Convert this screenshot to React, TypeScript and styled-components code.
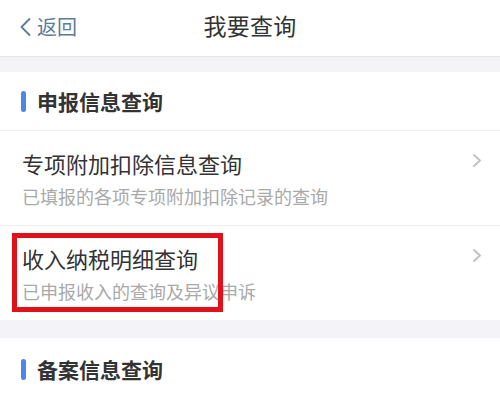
import styled, { createGlobalStyle } from "styled-components";

const GlobalStyle = createGlobalStyle`
  html, body {
    margin: 0;
    padding: 0;
    background: #ffffff;
  }
  body {
    font-family: "Noto Sans CJK SC", "Noto Sans", sans-serif;
    color: #333333;
    overflow: hidden;
  }
`;

interface QueryItem {
  title: string;
  desc: string;
  highlighted?: boolean;
}

const declareItems: QueryItem[] = [
  {
    title: "专项附加扣除信息查询",
    desc: "已填报的各项专项附加扣除记录的查询",
  },
  {
    title: "收入纳税明细查询",
    desc: "已申报收入的查询及异议申诉",
    highlighted: true,
  },
];

const BackIcon = () => (
  <svg width="15" height="20" viewBox="0 0 15 20" fill="none">
    <path
      d="M11.5 2 L3.5 10 L11.5 18"
      stroke="#5d7c98"
      strokeWidth="1.8"
      strokeLinecap="round"
      strokeLinejoin="round"
    />
  </svg>
);

const ChevronIcon = () => (
  <svg width="10" height="15" viewBox="0 0 10 15" fill="none">
    <path
      d="M2 2 L8 7.5 L2 13"
      stroke="#c2c2c2"
      strokeWidth="2"
      strokeLinecap="round"
      strokeLinejoin="round"
    />
  </svg>
);

const App = () => {
  return (
    <Page>
      <GlobalStyle />
      <NavBar>
        <BackButton>
          <BackIcon />
          <span>返回</span>
        </BackButton>
        <NavTitle>我要查询</NavTitle>
      </NavBar>
      <Gap $height={15} />
      <Section>
        <SectionHeading>
          <Marker />
          申报信息查询
        </SectionHeading>
        {declareItems.map((item) => (
          <Row key={item.title}>
            <RowText>
              <RowTitle>{item.title}</RowTitle>
              <RowDesc>{item.desc}</RowDesc>
            </RowText>
            <ChevronIcon />
            {item.highlighted && <Highlight />}
          </Row>
        ))}
      </Section>
      <Gap $height={18} />
      <Section>
        <SectionHeading $tall>
          <Marker />
          备案信息查询
        </SectionHeading>
      </Section>
    </Page>
  );
};

export default App;

const Page = styled.div`
  width: 500px;
  height: 400px;
  display: flex;
  flex-direction: column;
  background: #ffffff;
`;

const NavBar = styled.header`
  height: 56px;
  flex-shrink: 0;
  display: grid;
  grid-template-columns: 1fr auto 1fr;
  align-items: center;
  padding: 0 18px;
  border-bottom: 1px solid #e3e3ea;
  background: #ffffff;
`;

const BackButton = styled.div`
  display: flex;
  align-items: center;
  gap: 4px;
  color: #5d7c98;
  font-size: 20px;
  line-height: 1;
  margin-top: -3px;
`;

const NavTitle = styled.h1`
  margin: 0;
  margin-top: -6px;
  font-size: 23px;
  font-weight: 400;
  color: #333333;
  letter-spacing: 0.3px;
`;

const Gap = styled.div<{ $height: number }>`
  height: ${(p) => p.$height}px;
  flex-shrink: 0;
  background: #f4f4f8;
`;

const Section = styled.section`
  background: #ffffff;
  display: flex;
  flex-direction: column;
  flex-shrink: 0;
`;

const SectionHeading = styled.h2<{ $tall?: boolean }>`
  margin: 0;
  height: ${(p) => (p.$tall ? 62 : 58)}px;
  display: flex;
  align-items: center;
  gap: 11px;
  padding-left: 21px;
  font-size: 21px;
  font-weight: 700;
  color: #333333;
  border-bottom: 1px solid #efeff2;
`;

const Marker = styled.span`
  width: 5px;
  height: 21px;
  border-radius: 3px;
  background: #4d86e6;
`;

const Row = styled.div`
  position: relative;
  display: flex;
  align-items: center;
  justify-content: space-between;
  padding: 17px 18px 17px 22px;
  border-bottom: 1px solid #ededf0;

  &:last-child {
    border-bottom: none;
  }

  svg {
    margin-top: -36px;
  }
`;

const RowText = styled.div`
  display: flex;
  flex-direction: column;
  gap: 6px;
`;

const RowTitle = styled.div`
  font-size: 22px;
  line-height: 30px;
  color: #333333;
`;

const RowDesc = styled.div`
  font-size: 18px;
  line-height: 24px;
  color: #a9a9a9;
`;

const Highlight = styled.div`
  position: absolute;
  left: 12px;
  top: 7px;
  width: 211px;
  height: 79px;
  box-sizing: border-box;
  border: 5px solid #e2101a;
  pointer-events: none;
`;
